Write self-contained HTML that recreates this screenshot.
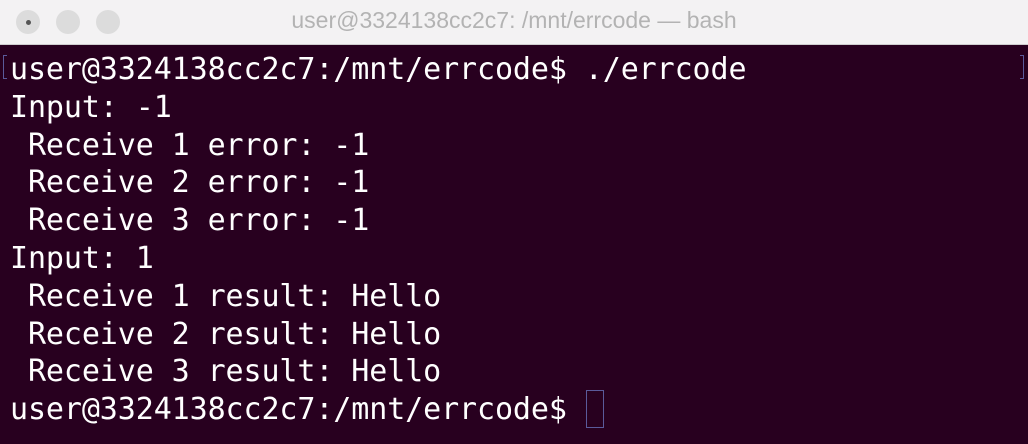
<!DOCTYPE html>
<html><head><style>
html,body{margin:0;padding:0;width:1028px;height:444px;overflow:hidden;background:#28001f}
.tb{position:absolute;left:0;top:0;width:1028px;height:44px;background:#f3f2f3;border-bottom:1px solid #cfcfcf}
.dot{position:absolute;top:10px;width:24px;height:24px;border-radius:50%;background:#dcdcdc}
.title{position:absolute;top:7px;left:0;width:1028px;text-align:center;font:23px "Liberation Sans",sans-serif;color:#b3b3b3}
pre{position:absolute;left:10px;top:51px;margin:0;font:30px/37.8px "DejaVu Sans Mono","Liberation Mono",monospace;color:#fff;letter-spacing:-0.1px}
.cur{position:absolute;left:586px;top:390px;width:16px;height:36px;border:1px solid #5a5a9a}
.br{position:absolute;top:55px;width:3px;height:22px;border:1px solid #5a5a9a}
</style></head><body>
<div class="tb">
<div class="dot" style="left:16px"></div><div style="position:absolute;left:26px;top:20px;width:5px;height:5px;border-radius:50%;background:#555"></div>
<div class="dot" style="left:56px"></div>
<div class="dot" style="left:96px"></div>
<div class="title">user@3324138cc2c7: /mnt/errcode — bash</div>
</div>
<div class="br" style="left:3px;border-right:none"></div>
<div class="br" style="left:1020px;border-left:none"></div>
<pre>user@3324138cc2c7:/mnt/errcode$ ./errcode
Input: -1
 Receive 1 error: -1
 Receive 2 error: -1
 Receive 3 error: -1
Input: 1
 Receive 1 result: Hello
 Receive 2 result: Hello
 Receive 3 result: Hello
user@3324138cc2c7:/mnt/errcode$ </pre>
<div class="cur"></div>
</body></html>
